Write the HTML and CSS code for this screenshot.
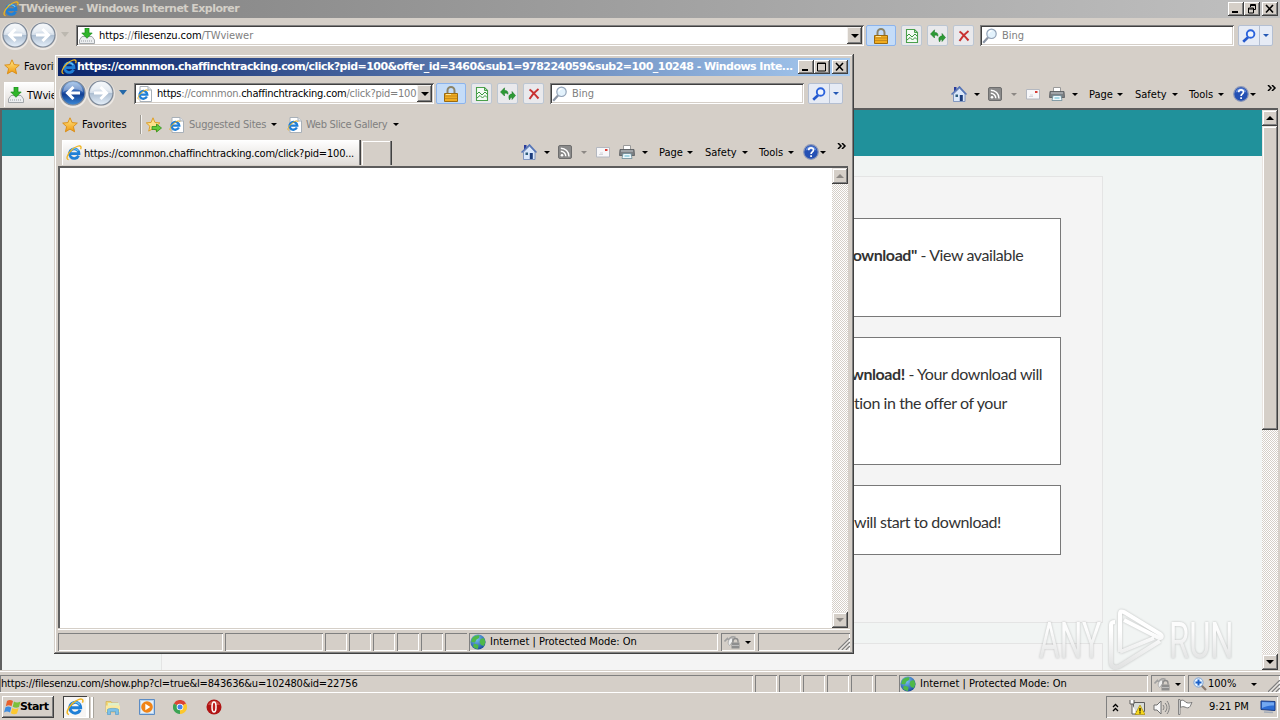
FILE: index.html
```html
<!DOCTYPE html>
<html lang="en">

<head>
    <meta charset="UTF-8">
    <title>TWviewer - Windows Internet Explorer</title>
    <link rel="stylesheet" href="styles.css">
</head>

<body>
    <!-- Icon set -->
    <svg class="sprite" width="0" height="0">
        <defs>
            <linearGradient id="gBlue" x1="0" y1="0" x2="0" y2="1">
                <stop offset="0" stop-color="#8ab4e4" />
                <stop offset=".45" stop-color="#2a5cae" />
                <stop offset=".55" stop-color="#123f92" />
                <stop offset="1" stop-color="#3c8ad8" />
            </linearGradient>
            <linearGradient id="gPale" x1="0" y1="0" x2="0" y2="1">
                <stop offset="0" stop-color="#f4f7fa" />
                <stop offset=".48" stop-color="#d3dde8" />
                <stop offset=".52" stop-color="#aebfd2" />
                <stop offset="1" stop-color="#e6f0fa" />
            </linearGradient>
            <linearGradient id="gGold" x1="0" y1="0" x2="0" y2="1">
                <stop offset="0" stop-color="#ffe98a" />
                <stop offset="1" stop-color="#f0980c" />
            </linearGradient>
            <linearGradient id="gMark" gradientUnits="userSpaceOnUse" x1="0" y1="8" x2="0" y2="60">
                <stop offset=".3" stop-color="#fff" />
                <stop offset="1" stop-color="#e2e3e3" />
            </linearGradient>
            <linearGradient id="gMarkText" gradientUnits="userSpaceOnUse" x1="0" y1="-35" x2="0" y2="2">
                <stop offset=".2" stop-color="#fcfcfc" />
                <stop offset="1" stop-color="#e2e3e3" />
            </linearGradient>
            <radialGradient id="gGlobe" cx=".4" cy=".3" r=".8">
                <stop offset="0" stop-color="#7cc4f4" />
                <stop offset="1" stop-color="#0e3f94" />
            </radialGradient>
            <symbol id="ie" viewBox="0 0 16 16">
                <path d="M12.6 10.6A4.8 4.8 0 1 1 13 8.6H4" fill="none" stroke="#1f7fd6" stroke-width="2.7" />
                <path d="M12.2 6A4.6 4.6 0 0 0 5 5" fill="none" stroke="#6cc6f6" stroke-width="1.2" />
                <path d="M2.6 14.6C-.4 14.4 1 9.4 5.6 5 9.6 1.200 14.400-.2 15 2c.2.8 0 1.500-.4 2.200" fill="none" stroke="#f0b41c" stroke-width="1.300" />
            </symbol>
            <symbol id="iepage" viewBox="0 0 16 16">
                <path d="M3 .5h8l3.500 3.500v11.500H3z" fill="#fff" stroke="#a8b0b8" />
                <path d="M11 .5v3.500h3.500" fill="#e4e8ec" stroke="#a8b0b8" />
                <path d="M9.900 10.600A3.900 3.900 0 1 1 10.300 8.600H3.600" fill="none" stroke="#1f7fd6" stroke-width="2.300" />
                <path d="M1.500 13.400c-1.500-1 .5-4.700 3.800-7.400C8.200 3.700 11 3.200 11 5" fill="none" stroke="#e8b020" stroke-width="1" />
            </symbol>
            <symbol id="star" viewBox="0 0 16 16">
                <path d="M8 .8l2.100 4.800 5.200.5-3.900 3.500 1.200 5.200L8 12.100l-4.600 2.700 1.200-5.200L.7 6.100l5.200-.5z" fill="url(#gGold)" stroke="#d98a10" stroke-width=".9" />
            </symbol>
            <symbol id="addstar" viewBox="0 0 16 16">
                <path d="M7 .8l1.900 4.600 5 .5-3.800 3.300 1.200 4.900L7 11.600l-4.300 2.500 1.200-4.900L.3 5.900l4.800-.5z" fill="#fbe08a" stroke="#dc9a1c" stroke-width=".9" />
                <path d="M6 9.500h4.500v-2.500l5 4-5 4v-2.500H6z" fill="#62c93c" stroke="#2f8f1c" stroke-width=".8" />
            </symbol>
            <symbol id="save" viewBox="0 0 16 16">
                <path d="M3 8.500h10l2.500 3.500v3.500H.5V12z" fill="#eceef0" stroke="#9a9ea2" stroke-width=".9" />
                <path d="M2 13h12" stroke="#9aa0a4" stroke-dasharray="1 1" />
                <path d="M6 0h4v5h3.200L8 10.300 2.800 5H6z" fill="#2fb52a" stroke="#178a1a" stroke-width=".7" />
            </symbol>
            <symbol id="back" viewBox="0 0 26 26">
                <circle cx="13" cy="13" r="12" stroke="#7e8a9a" stroke-width="1.200" />
                <path d="M3 12a10 10 0 0 1 20 0C17 8 9 9 3 12z" fill="#fff" opacity=".35" />
                <path d="M20 13H8M13.500 7L7.500 13l6 6" fill="none" stroke="#fff" stroke-width="3" />
            </symbol>
            <symbol id="lock" viewBox="0 0 14 16">
                <path d="M3.500 8V4.500a3.500 3.500 0 0 1 7 0V8" fill="none" stroke="#8c8468" stroke-width="2" />
                <path d="M.5 7.500h13v8H.5z" fill="#f0ac20" stroke="#9a6a10" />
                <path d="M1 10h12M1 12.500h12" stroke="#c88c1c" />
                <path d="M2 8.500h5" stroke="#fde49a" />
            </symbol>
            <symbol id="compat" viewBox="0 0 14 16">
                <path d="M1.500 1.500h8l3 3v10h-11z" fill="#f4fbf4" stroke="#4aa04c" stroke-width="1.100" />
                <path d="M9.500 1.500v3h3" fill="none" stroke="#4aa04c" />
                <path d="M2 8l2-2 3 3 3-3 2.500 2.500M2 12l3-2.500 2.500 2.500L10 9.500l2 2" fill="none" stroke="#3c9840" stroke-width="1" />
            </symbol>
            <symbol id="refresh" viewBox="0 0 16 14">
                <path d="M.5 5L4.500.8V3.500C7 3.200 8.200 4.500 8 7.300 7 6 6 6 4.500 6.300V9z" fill="#2c9a34" stroke="#1b7424" stroke-width=".5" />
                <path d="M15.500 8.500l-3.500-4v2.600C9 7 8 9.500 9.600 13c.4-2 1.200-2.500 2.400-2.500v2z" fill="#2c9a34" stroke="#1b7424" stroke-width=".5" />
            </symbol>
            <symbol id="stop" viewBox="0 0 12 12">
                <path d="M1.500 1.500c3 2 6 5.500 9 9M10.500 1C7 3.500 4 7 1.500 11" fill="none" stroke="#c83232" stroke-width="2" />
            </symbol>
            <symbol id="glass" viewBox="0 0 16 16">
                <path d="M1.200 14.800L6 9.500" stroke="#8a94a4" stroke-width="2.200" />
                <circle cx="9.500" cy="5.800" r="4.700" fill="#e3f2fc" stroke="#93a3b8" stroke-width="1.200" />
                <path d="M6.800 5.500a3 3 0 0 1 3-2.700" fill="none" stroke="#fff" stroke-width="1.300" />
            </symbol>
            <symbol id="find" viewBox="0 0 14 14">
                <path d="M1.200 12.800L6 8.200" stroke="#2458cc" stroke-width="2.600" />
                <circle cx="8.600" cy="5" r="3.800" fill="#eef4fe" stroke="#2a62dc" stroke-width="1.900" />
            </symbol>
            <symbol id="home" viewBox="0 0 16 16">
                <path d="M3 1h2.500v4H3z" fill="#2a3c9c" />
                <path d="M2.500 8L8.500 2.200 14 8v7.500H2.500z" fill="#dbe8fa" stroke="#6c86b8" stroke-width=".8" />
                <path d="M.5 8.500L8.500.9l7 7.600" fill="none" stroke="#5474b8" stroke-width="1.500" />
                <path d="M8.800 9h3v6h-3z" fill="#1c3c7c" />
                <path d="M4.500 8.500h2.500V11H4.500z" fill="#2d5d7c" />
            </symbol>
            <symbol id="rss" viewBox="0 0 14 14">
                <rect x=".5" y=".5" width="13" height="13" rx="1.500" fill="#8a8a8a" stroke="#6e6e6e" />
                <circle cx="4" cy="10.200" r="1.300" fill="#fff" />
                <path d="M2.800 6.300a5 5 0 0 1 5 5M2.800 3.200a8.200 8.200 0 0 1 8.200 8.200" fill="none" stroke="#fff" stroke-width="1.400" />
            </symbol>
            <symbol id="mail" viewBox="0 0 14 11">
                <path d="M.5.5h13v9.500H.5z" fill="#f7f7f9" stroke="#b4b8c0" />
                <path d="M9 2h2.500v2H9z" fill="#d83c34" />
                <path d="M3 7.500h4M4 6h3" stroke="#d4d4da" />
            </symbol>
            <symbol id="printer" viewBox="0 0 16 14">
                <path d="M4.500.5h7V5h-7z" fill="#fff" stroke="#9a9a9a" />
                <path d="M1 4.500h14l.5 6H.5z" fill="#7c8084" stroke="#54585c" stroke-width=".8" />
                <path d="M2 6h12" stroke="#c4c8cc" />
                <path d="M4 8.500h8l1 5H3z" fill="#eef8fc" stroke="#6c8c98" stroke-width=".8" />
                <path d="M5.500 11h5" stroke="#5cb4cc" />
            </symbol>
            <symbol id="help" viewBox="0 0 16 16">
                <circle cx="8" cy="8" r="7.300" fill="#2450b4" stroke="#8c98b8" stroke-width="1.200" />
                <path d="M2.500 6.500a5.700 5.700 0 0 1 11 0C10 5 6 5 2.500 6.500z" fill="#7ea4ec" opacity=".7" />
                <path d="M5.700 6.200c0-3 4.800-3 4.800-.2C10.500 8 8.100 7.800 8.100 10M8.100 11.200v1.800" fill="none" stroke="#fff" stroke-width="1.700" />
            </symbol>
            <symbol id="globe" viewBox="0 0 16 16">
                <circle cx="8" cy="8" r="7.600" fill="url(#gGlobe)" />
                <path d="M2 4.500C4 1.500 8 .8 9.500 1.500L9 4 6.500 5.500 5 8.500 1.200 8zM10.500 5l3.500-1 1.400 4-1.400 4-3-1-1.500-3zM4 9.500l4.500 1.500L8 15c-2 0-4-1-5-2.500z" fill="#4fb848" />
            </symbol>
            <symbol id="guard" viewBox="0 0 16 14">
                <path d="M.5 6.500l3-3 1.500 1.500C6 2 9 .8 11.500 2.500" fill="none" stroke="#a0a0a0" stroke-width="1.600" />
                <path d="M5.500 10.500C2.500 8 5 3 8.500 3v4z" fill="#efefef" stroke="#b0b0b0" />
                <path d="M9 7.500V6a2.500 2.500 0 0 1 5 0v1.500" fill="none" stroke="#8a8a8a" stroke-width="1.300" />
                <path d="M7.500 7.500h8v6h-8z" fill="#8e8e8e" />
                <path d="M8 10.500h7" stroke="#bcbcbc" />
            </symbol>
            <symbol id="zoomin" viewBox="0 0 14 14">
                <path d="M8 8l5 5" stroke="#8a7a70" stroke-width="2.200" />
                <circle cx="5.500" cy="5.500" r="4.600" fill="#e8f4ff" stroke="#7ca4d8" />
                <path d="M5.500 2.500v6M2.500 5.500h6" stroke="#1c60c8" stroke-width="2" />
            </symbol>
            <symbol id="grip" viewBox="0 0 12 12">
                <path d="M0 12L12 0M4 12l8-8M8 12l4-4" stroke="#808080" stroke-width="1.300" />
                <path d="M1.500 12L12 1.500M5.500 12L12 5.500M9.500 12L12 9.500" stroke="#fff" stroke-width=".8" />
            </symbol>
        </defs>
    </svg>

    <div class="desktop">
        <!-- Main browser window -->
        <div class="window main-window">
            <div class="titlebar inactive">
                <svg class="i16"><use href="#ie" /></svg>
                <span class="title">TWviewer - Windows Internet Explorer</span>
                <div class="caption">
                    <span class="cap"><svg width="12" height="10"><path d="M2 8h6" stroke="#000" stroke-width="2" /></svg></span>
                    <span class="cap"><svg width="12" height="10"><path d="M4.500 3V.5h5v5H8M4 1.500h6M2.500 4h5v5h-5zM2 5h6" fill="none" stroke="#000" /></svg></span>
                    <span class="cap cap-close"><svg width="12" height="10"><path d="M2 1l7 7.500M9 1L2 8.500" stroke="#000" stroke-width="1.600" /></svg></span>
                </div>
            </div>
            <div class="navbar">
                <div class="travel">
                    <svg class="round pale"><use href="#back" /></svg>
                    <svg class="round pale flip"><use href="#back" /></svg>
                    <i class="chev faded"></i>
                </div>
                <div class="field address">
                    <svg class="i16"><use href="#save" /></svg>
                    <span class="url"><b>https</b>://<b>filesenzu.com</b>/TWviewer</span>
                    <span class="drop"><i class="caret"></i></span>
                </div>
                <div class="tool tool-lock"><svg width="14" height="16"><use href="#lock" /></svg></div>
                <div class="tool"><svg width="14" height="16"><use href="#compat" /></svg></div>
                <div class="tool"><svg width="16" height="14"><use href="#refresh" /></svg></div>
                <div class="tool"><svg width="12" height="12"><use href="#stop" /></svg></div>
                <div class="field search">
                    <svg class="i16"><use href="#glass" /></svg>
                    <span>Bing</span>
                </div>
                <div class="go"><span><svg width="14" height="14"><use href="#find" /></svg></span><span><i class="caret blue"></i></span></div>
            </div>
            <div class="favbar">
                <svg class="i16"><use href="#star" /></svg>
                <span class="fav-label">Favorites</span>
            </div>
            <div class="tabbar">
                <div class="tab tab-main">
                    <svg class="i16"><use href="#save" /></svg>
                    <span>TWviewer</span>
                </div>
                <div class="commands">
                    <svg class="i16"><use href="#home" /></svg><i class="caret c-home"></i>
                    <svg class="i14"><use href="#rss" /></svg><i class="caret dim c-rss"></i>
                    <svg class="mail"><use href="#mail" /></svg>
                    <svg class="printer"><use href="#printer" /></svg><i class="caret c-print"></i>
                    <span class="cmd cmd-page">Page<i class="caret"></i></span>
                    <span class="cmd cmd-safety">Safety<i class="caret"></i></span>
                    <span class="cmd cmd-tools">Tools<i class="caret"></i></span>
                    <svg class="i16"><use href="#help" /></svg><i class="caret c-help"></i>
                    <svg class="more" viewBox="0 0 10 6"><path d="M1 0l3 3-3 3M5 0l3 3-3 3" /></svg>
                </div>
            </div>
            <div class="viewport">
                <div class="page">
                    <div class="banner"></div>
                    <div class="panel">
                        <div class="step step-1">
                            <p><strong>Download"</strong> - View available</p>
                        </div>
                        <div class="step step-2">
                            <p><strong>wnload!</strong> - Your download will</p>
                            <p>tion in the offer of your</p>
                        </div>
                        <div class="step step-3">
                            <p>will start to download!</p>
                        </div>
                    </div>
                    <div class="panel panel-next"></div>
                </div>
                <div class="scroll">
                    <span class="sbtn"><i class="caret up"></i></span>
                    <span class="thumb"></span>
                    <span class="sbtn sbtn-down"><i class="caret"></i></span>
                </div>
            </div>
            <div class="status">
                <span class="pane grow link">https://filesenzu.com/show.php?cl=true&amp;l=843636&amp;u=102480&amp;id=22756</span>
                <span class="pane sm"></span><span class="pane sm"></span><span class="pane sm"></span>
                <span class="pane sm"></span><span class="pane sm"></span><span class="pane sm last"></span>
                <span class="pane zone"><svg class="i16"><use href="#globe" /></svg><span>Internet | Protected Mode: On</span></span>
                <span class="pane guard"><svg width="16" height="14"><use href="#guard" /></svg><i class="caret"></i></span>
                <span class="pane zoom"><svg class="i14"><use href="#zoomin" /></svg><span>100%</span><i class="caret"></i><svg class="grip"><use href="#grip" /></svg></span>
            </div>
        </div>

        <!-- Taskbar -->
        <div class="taskbar">
            <div class="start">
                <svg width="18" height="18" viewBox="0 0 18 18">
                    <path d="M3 3c2-1.500 4-1.200 6 0L7.500 8.200C5.500 7 4 7 1.800 8.200z" fill="#e8602c" />
                    <path d="M10 3.500c2 1.200 4 1.200 6.500 0L15 9c-2 1.200-4 1-6.300-.2z" fill="#7cc03c" />
                    <path d="M1.500 9.200c2-1.200 3.800-1 5.800.2L6 14.500c-2-1.200-4-1.200-6 0z" fill="#3c8ce0" />
                    <path d="M8.300 10c2 1.200 4 1.200 6.300 0L13 15.500c-2 1.200-4 1-6.200-.3z" fill="#fcc830" />
                </svg>
                <span>Start</span>
            </div>
            <div class="task-ie"><svg width="18" height="18"><use href="#ie" /></svg></div>
            <div class="task-stack"></div>
            <div class="launch">
                <svg width="16" height="16" viewBox="0 0 16 16">
                    <path d="M1 2.500h5l1 1.500h6v9H1z" fill="#f2d878" stroke="#d0b050" stroke-width=".7" />
                    <path d="M3 4h11v4H3z" fill="#dff0c8" />
                    <path d="M1 6.500h14V13H1z" fill="#fbe9a0" />
                    <path d="M2.500 15.500V10.500c0-1.500 11-1.500 11 0v5h-3v-3h-5v3z" fill="#7cc0e8" stroke="#4c98c8" stroke-width=".6" />
                </svg>
                <svg width="16" height="16" viewBox="0 0 16 16">
                    <path d="M.5.5h15v15H.5z" fill="#b8d4f0" stroke="#5c8cc4" />
                    <path d="M2 2h12v12H2z" fill="#e4f0fa" />
                    <circle cx="8" cy="8" r="5.800" fill="#f08418" />
                    <path d="M6.300 4.800l5 3.200-5 3.200z" fill="#fff" />
                </svg>
                <svg width="14" height="14" viewBox="0 0 14 14">
                    <path d="M7 7L.9 3.500A7 7 0 0 1 13.100 3.500z" fill="#dc4434" />
                    <path d="M7 7L13.100 3.500A7 7 0 0 1 7 14z" fill="#fcc82c" />
                    <path d="M7 7v7A7 7 0 0 1 .9 3.500z" fill="#3ca454" />
                    <circle cx="7" cy="7" r="3.300" fill="#fff" />
                    <circle cx="7" cy="7" r="2.500" fill="#4484ec" />
                </svg>
                <svg class="opera" width="16" height="16" viewBox="0 0 16 16">
                    <circle cx="8" cy="8" r="7.500" fill="#b01414" />
                    <path d="M2 6a6.500 6.500 0 0 1 12 0z" fill="#e06a60" opacity=".6" />
                    <ellipse cx="8" cy="8" rx="2" ry="5" fill="#c01c1c" stroke="#fff" stroke-width="1.500" />
                </svg>
            </div>
            <div class="tray">
                <svg class="t-more" width="7" height="9" viewBox="0 0 7 9"><path d="M1 4l2.500-2.500L6 4M1 8l2.500-2.500L6 8" fill="none" stroke="#000" stroke-width="1.300" /></svg>
                <svg class="t-net" width="16" height="16" viewBox="0 0 16 16">
                    <path d="M4.500 3.500h11v9h-11z" fill="#d8dcd8" stroke="#5c5c5c" />
                    <path d="M1 1v4h4V1M3 5v10h5" fill="#fff" stroke="#5c5c5c" />
                    <path d="M11 6l5 9.500H6z" fill="#f8d81c" stroke="#a88c10" stroke-width=".7" />
                    <path d="M11 9v3.500M11 13.300v1.200" stroke="#000" stroke-width="1.200" />
                </svg>
                <svg class="t-vol" width="17" height="15" viewBox="0 0 17 15">
                    <path d="M1 5h3l4-4v13L4 10H1z" fill="#f8f8f8" stroke="#707070" />
                    <path d="M10 5c1.200 1.500 1.200 3.500 0 5M12 3c2.500 2.500 2.500 6.500 0 9M14 1c3 4 3 9 0 13" fill="none" stroke="#808080" />
                </svg>
                <svg class="t-flag" width="16" height="16" viewBox="0 0 16 16">
                    <path d="M1.500.5h1.500v15H1.500z" fill="#fff" stroke="#6c6c6c" stroke-width=".8" />
                    <path d="M3.500 1.500c3-1 4 .5 5 1.500 2 1.500 4 1 6.500.5-1 1.500-1.500 4-3 5-2 1-3.500-.5-5-.7-1.500-.3-2.500 0-3.500.7z" fill="#fff" stroke="#6c6c6c" stroke-width=".9" />
                </svg>
                <span class="clock">9:21 PM</span>
                <svg class="t-desk" width="16" height="14" viewBox="0 0 16 14">
                    <path d="M1 1l14 .5v9L1 9.500z" fill="#2c6cd4" stroke="#1c3c84" />
                    <path d="M2 2l12 .5v3C9 5.500 6 6.500 2 8z" fill="#74a8f0" />
                    <path d="M4 12l9 .5" stroke="#a4acb8" stroke-width="1.500" />
                </svg>
            </div>
        </div>

        <!-- Popup browser window -->
        <div class="popup">
            <div class="window">
                <div class="titlebar active">
                    <svg class="i16"><use href="#ie" /></svg>
                    <span class="title">https://comnmon.chaffinchtracking.com/click?pid=100&amp;offer_id=3460&amp;sub1=978224059&amp;sub2=100_10248 - Windows Inte...</span>
                    <div class="caption">
                        <span class="cap"><svg width="12" height="10"><path d="M2 8h6" stroke="#000" stroke-width="2" /></svg></span>
                        <span class="cap"><svg width="12" height="10"><path d="M1.500 1h8v8h-8zM1 1.500h9" fill="none" stroke="#000" /></svg></span>
                        <span class="cap cap-close"><svg width="12" height="10"><path d="M2 1l7 7.500M9 1L2 8.500" stroke="#000" stroke-width="1.600" /></svg></span>
                    </div>
                </div>
                <div class="navbar">
                    <div class="travel">
                        <svg class="round bold"><use href="#back" /></svg>
                        <svg class="round pale flip"><use href="#back" /></svg>
                        <i class="chev"></i>
                    </div>
                    <div class="field address">
                        <svg class="i16"><use href="#iepage" /></svg>
                        <span class="url url-tight"><b>https</b>://comnmon.<b>chaffinchtracking.com</b>/click?pid=100</span>
                        <span class="drop"><i class="caret"></i></span>
                    </div>
                    <div class="tool tool-lock"><svg width="14" height="16"><use href="#lock" /></svg></div>
                    <div class="tool"><svg width="14" height="16"><use href="#compat" /></svg></div>
                    <div class="tool"><svg width="16" height="14"><use href="#refresh" /></svg></div>
                    <div class="tool"><svg width="12" height="12"><use href="#stop" /></svg></div>
                    <div class="field search">
                        <svg class="i16"><use href="#glass" /></svg>
                        <span>Bing</span>
                    </div>
                    <div class="go"><span><svg width="14" height="14"><use href="#find" /></svg></span><span><i class="caret blue"></i></span></div>
                </div>
                <div class="favbar">
                    <svg class="i16"><use href="#star" /></svg>
                    <span class="fav-label">Favorites</span>
                    <span class="sep"></span>
                    <svg class="i16"><use href="#addstar" /></svg>
                    <svg class="i16 fav-icon"><use href="#iepage" /></svg>
                    <span class="fav-link sites">Suggested Sites<i class="caret"></i></span>
                    <svg class="i16"><use href="#iepage" /></svg>
                    <span class="fav-link gallery">Web Slice Gallery<i class="caret"></i></span>
                </div>
                <div class="tabbar">
                    <div class="tab tab-popup">
                        <svg class="i16"><use href="#ie" /></svg>
                        <span>https://comnmon.chaffinchtracking.com/click?pid=100...</span>
                    </div>
                    <div class="tab-new"></div>
                    <div class="commands">
                        <svg class="i16"><use href="#home" /></svg><i class="caret c-home"></i>
                        <svg class="i14"><use href="#rss" /></svg><i class="caret dim c-rss"></i>
                        <svg class="mail"><use href="#mail" /></svg>
                        <svg class="printer"><use href="#printer" /></svg><i class="caret c-print"></i>
                        <span class="cmd cmd-page">Page<i class="caret"></i></span>
                        <span class="cmd cmd-safety">Safety<i class="caret"></i></span>
                        <span class="cmd cmd-tools">Tools<i class="caret"></i></span>
                        <svg class="i16"><use href="#help" /></svg><i class="caret c-help"></i>
                        <svg class="more" viewBox="0 0 10 6"><path d="M1 0l3 3-3 3M5 0l3 3-3 3" /></svg>
                    </div>
                </div>
                <div class="viewport">
                    <div class="page blank"></div>
                    <div class="scroll">
                        <span class="sbtn"><i class="caret up dim"></i></span>
                        <span class="sbtn sbtn-down"><i class="caret dim"></i></span>
                    </div>
                </div>
                <div class="status">
                    <span class="pane p-first"></span>
                    <span class="pane grow"></span>
                    <span class="pane sm"></span><span class="pane sm"></span><span class="pane sm"></span>
                    <span class="pane sm"></span><span class="pane sm"></span><span class="pane sm last"></span>
                    <span class="pane zone"><svg class="i16"><use href="#globe" /></svg><span>Internet | Protected Mode: On</span></span>
                    <span class="pane guard"><svg width="16" height="14"><use href="#guard" /></svg><i class="caret"></i></span>
                    <span class="pane zoom"><svg class="grip"><use href="#grip" /></svg></span>
                </div>
            </div>
        </div>

        <!-- Watermark -->
        <svg class="watermark" width="200" height="66" viewBox="0 0 200 66">
            <g class="wm-text">
                <text transform="translate(3 51) scale(.66 1)" textLength="94" lengthAdjust="spacingAndGlyphs">ANY</text>
                <text transform="translate(133 51) scale(.66 1)" textLength="98" lengthAdjust="spacingAndGlyphs">RUN</text>
            </g>
            <g class="wm-mark">
                <path d="M75 55V18c0-2 1-3 4-3M84 45V7c0-3 2-3 4-2l36 22c3 2 2 4-1 4L88 13M75 55c0 6 5 6 9 4l40-25M84 45l34-14" />
            </g>
        </svg>
    </div>
</body>

</html>
```
FILE: styles.css
```css
body {
    margin: 0;
    font-family: "DejaVu Sans Condensed", "DejaVu Sans", sans-serif;
    font-size: 11px;
    line-height: 14px;
    color: #000;
    overflow: hidden;
}

* {
    box-sizing: border-box;
}

svg {
    display: block;
    flex: none;
}

.sprite {
    position: absolute;
}

.desktop {
    position: relative;
    width: 1280px;
    height: 720px;
    display: flex;
    flex-direction: column;
    overflow: hidden;
    background: #d5cfc8;
}

.window {
    display: flex;
    flex-direction: column;
    width: 100%;
    height: 100%;
    background: #d5cfc8;
    white-space: nowrap;
}

.main-window {
    height: 692px;
    flex: none;
}

.popup {
    position: absolute;
    left: 54px;
    top: 54px;
    width: 800px;
    height: 600px;
    padding: 4px;
    background: #d5cfc8;
    box-shadow: inset -1px -1px #404040, inset 1px 1px #d5cfc8, inset -2px -2px #808080, inset 2px 2px #fff;
}

.i16 {
    width: 16px;
    height: 16px;
}

.i14 {
    width: 14px;
    height: 14px;
}

.caret {
    display: block;
    flex: none;
    width: 0;
    height: 0;
    border: 3px solid transparent;
    border-top-color: #000;
    border-bottom: 0;
}

.caret.up {
    border-top: 0;
    border-bottom: 3px solid #000;
}

.caret.dim {
    border-top-color: #8c8884;
}

.caret.up.dim {
    border-bottom-color: #8c8884;
}

.caret.blue {
    border-top-color: #2458b4;
}

/* Title bars */
.titlebar {
    display: flex;
    align-items: center;
    height: 18px;
    flex: none;
    padding: 0 2px 0 3px;
    font-family: "DejaVu Sans", sans-serif;
    font-weight: bold;
    font-size: 11px;
}

.titlebar.inactive {
    background: linear-gradient(90deg, #808080, #c0c0c0);
    color: #d4d0c8;
}

.titlebar.active {
    background: linear-gradient(90deg, #0a246a, #a6caf0);
    color: #fff;
}

.title {
    flex: 1;
    letter-spacing: -.54px;
}

.caption {
    display: flex;
}

.cap {
    width: 16px;
    height: 14px;
    padding: 2px;
    background: #d5cfc8;
    box-shadow: inset -1px -1px #404040, inset 1px 1px #fff, inset -2px -2px #808080;
}

.cap-close {
    margin-left: 2px;
}

/* Address row */
.navbar {
    display: flex;
    align-items: center;
    height: 35px;
    flex: none;
    padding: 0 7px 0 2px;
}

.travel {
    display: flex;
    align-items: center;
    width: 74px;
    height: 28px;
    padding-bottom: 2px;
    flex: none;
}

.round {
    width: 26px;
    height: 26px;
    margin-right: 2px;
    border-radius: 13px;
    box-shadow: 0 1px 0 1px #ece8e4;
}

.round.pale {
    fill: url(#gPale);
}

.round.bold {
    fill: url(#gBlue);
}

.flip {
    transform: scaleX(-1);
}

.chev {
    margin-left: 3px;
    border: 4px solid transparent;
    border-top: 5px solid #2468a8;
    border-bottom: 0;
    width: 0;
}

.chev.faded {
    border-top-color: #bcb8b0;
}

.field {
    display: flex;
    align-items: center;
    height: 21px;
    padding: 0 2px;
    background: #fff;
    box-shadow: inset 1px 1px #808080, inset -1px -1px #fff, inset 2px 2px #404040, inset -2px -2px #d5cfc8;
}

.address {
    flex: 1;
    min-width: 0;
    padding-left: 3px;
}

.url {
    flex: 1;
    min-width: 0;
    margin-left: 4px;
    letter-spacing: -.06px;
    color: #808080;
}

.url-tight {
    letter-spacing: -.24px;
}

.url b {
    font-weight: normal;
    color: #000;
}

.drop {
    display: flex;
    align-items: center;
    justify-content: center;
    width: 15px;
    height: 17px;
    flex: none;
    background: #d5cfc8;
    box-shadow: inset -1px -1px #404040, inset 1px 1px #f4f2f0, inset -2px -2px #808080;
}

.drop .caret,
.status .caret {
    border-width: 4px 4px 0;
}

.status .guard .caret,
.status .zoom .caret {
    border-width: 3px 3px 0;
}

.tool {
    display: flex;
    align-items: center;
    justify-content: center;
    width: 21px;
    height: 21px;
    margin-left: 5px;
    flex: none;
    background: #e9e9ec;
    border: 1px solid #bcc6d2;
    border-radius: 2px;
}

.tool-lock {
    width: 30px;
    margin-left: 2px;
    background: #c4dcf8;
    border-color: #8cb4ec;
}

.search {
    width: 254px;
    flex: none;
    margin-left: 6px;
    color: #808080;
}

.search span {
    margin-left: 4px;
}

.go {
    display: flex;
    width: 35px;
    height: 21px;
    flex: none;
    margin-left: 4px;
    background: #e6ebf5;
    border: 1px solid #b4bfd2;
    border-radius: 2px;
}

.go span {
    display: flex;
    align-items: center;
    justify-content: center;
    width: 20px;
}

.go span + span {
    width: 13px;
    border-left: 1px solid #b4bfd2;
}

/* Favorites bar */
.favbar {
    display: flex;
    align-items: center;
    height: 27px;
    flex: none;
    padding-left: 4px;
}

.fav-label {
    margin-left: 4px;
    width: 58px;
}

.sep {
    width: 2px;
    height: 19px;
    margin-right: 4px;
    background: #9c9890;
    border-right: 1px solid #f4f2f0;
}

.fav-icon {
    margin-left: 7px;
}

.fav-link {
    display: flex;
    align-items: center;
    justify-content: space-between;
    margin-left: 4px;
    letter-spacing: -.18px;
    color: #808080;
}

.sites {
    width: 88px;
    margin-right: 10px;
}

.gallery {
    width: 93px;
    margin-left: 3px;
    letter-spacing: -.3px;
}

/* Tabs and command bar */
.tabbar {
    display: flex;
    align-items: flex-end;
    height: 28px;
    flex: none;
    padding-left: 4px;
}

.tab {
    display: flex;
    align-items: center;
    height: 25px;
    padding-left: 4px;
    background: linear-gradient(#fff, #e0dcd8);
    box-shadow: inset -1px 0 #404040, inset -2px 0 #808080, inset 1px 1px #fff;
    margin-bottom: 1px;
}

.tab span {
    margin-left: 2px;
    padding-top: 2px;
    letter-spacing: -.2px;
}

.tab-main {
    width: 298px;
}

.tab-main span {
    margin-left: 3px;
}

.tab-popup {
    width: 299px;
}

.tab-new {
    width: 30px;
    height: 24px;
    margin-left: 1px;
    margin-bottom: 1px;
    box-shadow: inset -1px 0 #404040, inset -2px 0 #808080, inset 1px 1px #fff;
}

.commands {
    display: flex;
    align-items: center;
    width: 329px;
    height: 28px;
    margin-left: auto;
}

.c-home {
    margin: 0 8px 0 7px;
}

.c-rss {
    margin: 0 9px 0 9px;
}

.mail {
    width: 14px;
    height: 11px;
    margin-right: 9px;
}

.printer {
    width: 16px;
    height: 14px;
}

.c-print {
    margin: 0 11px 0 7px;
}

.cmd {
    display: flex;
    align-items: center;
    justify-content: space-between;
    flex: none;
    padding-top: 1px;
}

.cmd-page {
    width: 34px;
    margin-right: 12px;
}

.cmd-safety {
    width: 43px;
    margin-right: 11px;
}

.cmd-tools {
    width: 35px;
    margin-right: 9px;
}

.c-help {
    margin-left: 1px;
}

.more {
    width: 10px;
    height: 6px;
    margin: -12px 0 0 11px;
    fill: none;
    stroke: #000;
    stroke-width: 1.5;
}

/* Content area */
.viewport {
    display: flex;
    flex: 1;
    min-height: 0;
    margin-right: 2px;
    border-left: 2px solid #606060;
    border-top: 2px solid #5c5c5c;
}

.page {
    flex: 1;
    min-width: 0;
    overflow: hidden;
    background: #f1f4f3;
}

.page.blank {
    background: #fff;
}

.banner {
    height: 46px;
    background: #20919b;
}

.panel {
    width: 942px;
    height: 447px;
    margin: 20px 0 0 159px;
    padding: 41px 41px 0;
    background: #f4f4f4;
    border: 1px solid #e4e4e4;
}

.panel-next {
    height: 200px;
}

.step {
    padding: 21px 0 0 650px;
    margin-bottom: 20px;
    background: #fff;
    border: 1px solid #787878;
    font-family: Lato, sans-serif;
    font-size: 16px;
    line-height: 29px;
    letter-spacing: -.42px;
    color: #333;
}

.step p {
    margin: 0;
}

.step-1 {
    height: 99px;
    padding-left: 637px;
}

.step-2 {
    height: 128px;
}

.step-2 strong {
    margin-left: -3px;
}

.step-3 {
    height: 70px;
}

/* Scrollbars */
.scroll {
    display: flex;
    flex-direction: column;
    width: 16px;
    flex: none;
    background: repeating-conic-gradient(#fff 0 25%, #d5cfc8 0 50%) 0 0 / 2px 2px;
}

.sbtn {
    display: flex;
    align-items: center;
    justify-content: center;
    height: 16px;
}

.sbtn,
.thumb {
    flex: none;
    background: #d5cfc8;
    box-shadow: inset -1px -1px #404040, inset 1px 1px #e8e4e0, inset -2px -2px #808080, inset 2px 2px #fff;
}

.sbtn .caret {
    border-left-width: 4px;
    border-right-width: 4px;
}

.sbtn .caret.up {
    border-bottom-width: 4px;
}

.sbtn .caret:not(.up) {
    border-top-width: 4px;
}

.thumb {
    height: 304px;
}

.sbtn-down {
    margin-top: auto;
}

/* Status bars */
.status {
    display: flex;
    height: 22px;
    flex: none;
    padding-top: 4px;
    border-top: 1px solid #d5cfc8;
    box-shadow: inset 0 1px #fff;
}

.pane {
    display: flex;
    align-items: center;
    margin-right: 3px;
    height: 18px;
    box-shadow: inset 1px 1px #808080, inset -1px -1px #fff;
}

.pane.grow {
    flex: 1;
    margin-right: 2px;
    padding-left: 1px;
}

.pane.link {
    letter-spacing: -.19px;
}

.pane.sm {
    width: 22px;
    margin-right: 2px;
}

.pane.sm.last {
    box-shadow: inset 1px 1px #808080, inset 0 -1px #fff;
}

.p-first {
    width: 165px;
    margin-right: 2px;
}

.zone {
    width: 249px;
    padding-left: 1px;
}

.zone span {
    margin-left: 4px;
}

.guard {
    width: 34px;
    padding-left: 3px;
}

.guard .caret {
    margin-left: 5px;
}

.zoom {
    width: 92px;
    margin-right: 0;
    padding-left: 5px;
}

.zoom span {
    margin-left: 1px;
    width: 43px;
}

.grip {
    width: 12px;
    height: 12px;
    margin: 4px 0 0 auto;
}

/* Taskbar */
.taskbar {
    display: flex;
    align-items: center;
    height: 28px;
    flex: none;
    padding: 2px 2px 0;
    box-shadow: inset 0 1px #fff;
}

.start {
    display: flex;
    align-items: center;
    width: 52px;
    height: 22px;
    padding-left: 2px;
    font-family: "DejaVu Sans", sans-serif;
    font-weight: bold;
    letter-spacing: -.6px;
    box-shadow: inset -1px -1px #404040, inset 1px 1px #fff, inset -2px -2px #808080;
}

.start span {
    margin-left: -2px;
}

.task-ie {
    display: flex;
    align-items: center;
    justify-content: center;
    width: 24px;
    height: 22px;
    margin-left: 9px;
    background: #f7f5f3;
    box-shadow: inset 1px 1px #404040, inset -1px -1px #fff;
}

.task-stack {
    width: 7px;
    height: 21px;
    background: repeating-linear-gradient(90deg, #fff 0 2px, #a8a49c 2px 3px, #d5cfc8 3px 4px);
}

.launch {
    display: flex;
    align-items: center;
    gap: 18px;
    margin-left: 11px;
}

.opera {
    margin-left: 1px;
}

.tray {
    display: flex;
    align-items: center;
    width: 172px;
    height: 22px;
    margin-left: auto;
    padding-left: 6px;
    box-shadow: inset 1px 1px #808080, inset -1px -1px #fff;
}

.t-net {
    margin-left: 10px;
}

.t-vol {
    margin-left: 8px;
}

.t-flag {
    margin-left: 7px;
}

.clock {
    width: 43px;
    margin-left: 16px;
}

.t-desk {
    margin-left: 8px;
}

.watermark {
    position: absolute;
    left: 1036px;
    top: 607px;
    filter: drop-shadow(0 0 1px rgba(0, 0, 0, .22));
}

.wm-text {
    font-family: Roboto, sans-serif;
    font-size: 50px;
    font-weight: 400;
    fill: url(#gMarkText);
}

.wm-mark {
    fill: none;
    stroke: url(#gMark);
    stroke-width: 4;
}
```
